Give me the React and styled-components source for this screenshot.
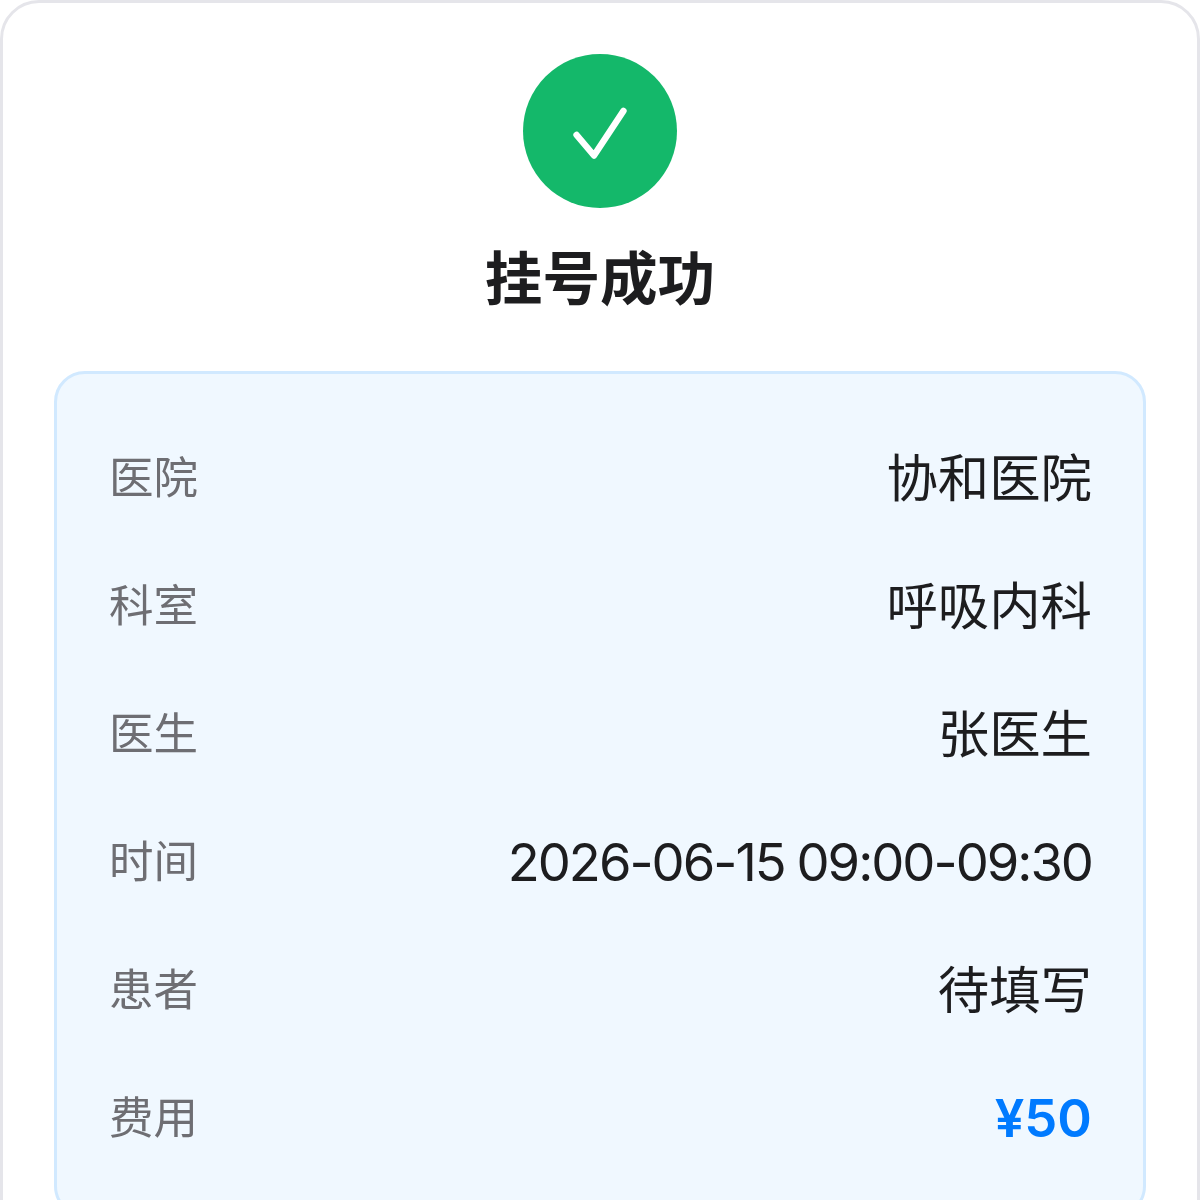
import React from 'react';
import styled, { createGlobalStyle } from 'styled-components';

const GlobalStyle = createGlobalStyle`
  html, body {
    margin: 0;
    padding: 0;
    height: 1200px;
    overflow: hidden;
    background: #ffffff;
    font-family: Inter, "Noto Sans CJK SC", sans-serif;
  }
`;

const Card = styled.div`
  box-sizing: border-box;
  width: 1200px;
  min-height: 1400px;
  padding: 51px 51px;
  background: #ffffff;
  border: 3px solid #e5e5ea;
  border-radius: 39px;
  display: flex;
  flex-direction: column;
  align-items: center;
`;

const Badge = styled.div`
  width: 154px;
  height: 154px;
  flex-shrink: 0;
  border-radius: 50%;
  background: #14b86a;
  display: flex;
  align-items: center;
  justify-content: center;
`;

const Title = styled.h1`
  margin: 32px 0 53px;
  font-size: 57.6px;
  line-height: 78px;
  font-weight: 700;
  color: #1d1d1f;
  font-family: Inter, "Noto Sans CJK SC", sans-serif;
  will-change: opacity;
`;

const InfoBox = styled.div`
  box-sizing: border-box;
  width: 100%;
  padding: 49px 51px 49px 52px;
  background: #f0f8ff;
  border: 3px solid #d1e9ff;
  border-radius: 31px;
  display: flex;
  flex-direction: column;
  gap: 26px;
`;

const Row = styled.div`
  display: flex;
  align-items: center;
  justify-content: space-between;
  height: 102px;
`;

const Label = styled.span`
  font-size: 44.5px;
  color: #6e6e73;
  will-change: opacity;
`;

const Value = styled.span`
  font-size: 51.4px;
  color: #1d1d1f;
  will-change: opacity;
`;

// digits sit a little larger and lower than the CJK values
const LatinValue = styled(Value)`
  font-size: 52.5px;
  padding-top: 7px;
  letter-spacing: ${(p) => (p.$accent ? '0' : '-2px')};
  word-spacing: -1px;
  color: ${(p) => (p.$accent ? '#007aff' : '#1d1d1f')};
  font-weight: ${(p) => (p.$accent ? 600 : 400)};
`;

const rows = [
  { label: '医院', value: '协和医院' },
  { label: '科室', value: '呼吸内科' },
  { label: '医生', value: '张医生' },
  { label: '时间', value: '2026-06-15 09:00-09:30', latin: true },
  { label: '患者', value: '待填写' },
  { label: '费用', value: '¥50', latin: true, accent: true },
];

export default function App() {
  return (
    <>
      <GlobalStyle />
      <Card>
        <Badge>
          <svg width="60" height="60" viewBox="0 0 60 60" fill="none">
            <path d="M6.6 34 L24 54.5 L53.4 10" stroke="#ffffff" strokeWidth="6.5" strokeLinecap="round" strokeLinejoin="round" />
          </svg>
        </Badge>
        <Title>挂号成功</Title>
        <InfoBox>
          {rows.map((r) => (
            <Row key={r.label}>
              <Label>{r.label}</Label>
              {r.latin
                ? <LatinValue $accent={r.accent}>{r.value}</LatinValue>
                : <Value>{r.value}</Value>}
            </Row>
          ))}
        </InfoBox>
      </Card>
    </>
  );
}
